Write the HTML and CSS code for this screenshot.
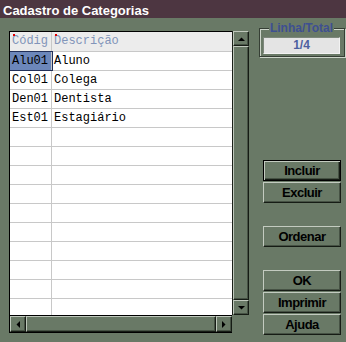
FILE: index.html
```html
<!DOCTYPE html>
<html>
<head>
<meta charset="utf-8">
<link rel="stylesheet" href="styles.css">
</head>
<body>
<div class="title">Cadastro de Categorias</div>
<div class="main">
  <div class="grid">
    <div class="table">
      <div class="row head">
        <div class="cell c1"><i class="req"></i>Códig</div>
        <div class="cell c2"><i class="req"></i>Descrição</div>
      </div>
      <div class="row"><div class="cell c1 sel">Alu01</div><div class="cell c2">Aluno</div></div>
      <div class="row"><div class="cell c1">Col01</div><div class="cell c2">Colega</div></div>
      <div class="row"><div class="cell c1">Den01</div><div class="cell c2">Dentista</div></div>
      <div class="row"><div class="cell c1">Est01</div><div class="cell c2">Estagiário</div></div>
      <div class="row"><div class="cell c1"></div><div class="cell c2"></div></div>
      <div class="row"><div class="cell c1"></div><div class="cell c2"></div></div>
      <div class="row"><div class="cell c1"></div><div class="cell c2"></div></div>
      <div class="row"><div class="cell c1"></div><div class="cell c2"></div></div>
      <div class="row"><div class="cell c1"></div><div class="cell c2"></div></div>
      <div class="row"><div class="cell c1"></div><div class="cell c2"></div></div>
      <div class="row"><div class="cell c1"></div><div class="cell c2"></div></div>
      <div class="row"><div class="cell c1"></div><div class="cell c2"></div></div>
      <div class="row"><div class="cell c1"></div><div class="cell c2"></div></div>
      <div class="row"><div class="cell c1"></div><div class="cell c2"></div></div>
    </div>
    <div class="vscroll">
      <div class="sbtn bevel"><svg width="7" height="4" viewBox="0 0 7 4"><path d="M0 4H7L3.5 0.5Z" fill="#000"/></svg></div>
      <div class="thumb bevel"></div>
      <div class="sbtn bevel"><svg width="7" height="4" viewBox="0 0 7 4"><path d="M0 0H7L3.5 3.5Z" fill="#000"/></svg></div>
    </div>
    <div class="hscroll">
      <div class="hbtn bevel"><svg width="4" height="7" viewBox="0 0 4 7"><path d="M4 0V7L0.5 3.5Z" fill="#000"/></svg></div>
      <div class="thumb bevel"></div>
      <div class="hbtn bevel"><svg width="4" height="7" viewBox="0 0 4 7"><path d="M0 0V7L3.5 3.5Z" fill="#000"/></svg></div>
    </div>
    <div class="corner"></div>
  </div>
  <div class="side">
    <div class="group">
      <div class="glabel">Linha/Total</div>
      <div class="counter">1/4</div>
    </div>
    <div class="actions">
      <div class="btngroup">
        <button class="btn default">Incluir</button>
        <button class="btn">Excluir</button>
      </div>
      <div class="btngroup">
        <button class="btn">Ordenar</button>
      </div>
      <div class="btngroup">
        <button class="btn">OK</button>
        <button class="btn">Imprimir</button>
        <button class="btn">Ajuda</button>
      </div>
    </div>
  </div>
</div>
</body>
</html>
```

FILE: styles.css
```css
* { box-sizing: border-box; }

body {
  margin: 0;
  width: 346px;
  height: 342px;
  overflow: hidden;
  background: #697966;
  font-family: "Liberation Sans", Arial, sans-serif;
}

.title {
  height: 18px;
  background: #4d3641;
  color: #fff;
  font-weight: bold;
  font-size: 13px;
  line-height: 15px;
  padding: 3px 0 0 3px;
  white-space: nowrap;
}

.main {
  display: flex;
  align-items: flex-start;
}

.grid {
  display: grid;
  grid-template-columns: 223px 17px;
  grid-template-rows: 284px 18px;
  margin: 13px 0 0 9px;
}

.table {
  background: #fff;
  border-left: 1px solid #000;
  border-top: 1px solid #000;
  overflow: hidden;
  font-family: "Liberation Mono", "Courier New", monospace;
  font-size: 12px;
  color: #000;
}

.row {
  display: flex;
  height: 19px;
  border-bottom: 1px solid #c8c8c8;
}

.row.head {
  height: 20px;
  background: #ececec;
  color: #8194b9;
}

.cell {
  position: relative;
  line-height: 18px;
  padding-left: 2px;
  white-space: nowrap;
  overflow: hidden;
}

.head .cell {
  line-height: 19px;
}

.c1 {
  width: 42px;
  flex: none;
  border-right: 1px solid #c8c8c8;
}

.c2 {
  flex: 1;
}

.sel {
  overflow: visible;
  background: #6c87ba;
  outline: 1px solid #22305a;
}

.req {
  position: absolute;
  left: 3px;
  top: 2px;
  width: 2px;
  height: 2px;
  background: #e00000;
}

.bevel {
  background: #697966;
  border: 1px solid;
  border-color: #bfc8bc #161c15 #161c15 #bfc8bc;
  box-shadow: inset -1px -1px #465244;
}

.vscroll {
  display: flex;
  flex-direction: column;
  border-left: 1px solid #1b2119;
}

.sbtn {
  height: 15px;
  flex: none;
  display: flex;
  align-items: center;
  justify-content: center;
}

.thumb {
  flex: 1;
}

.hscroll {
  display: flex;
  border-left: 1px solid #000;
  border-top: 1px solid #000;
  border-bottom: 1px solid #000;
}

.hbtn {
  width: 16px;
  flex: none;
  display: flex;
  align-items: center;
  justify-content: center;
}

.side {
  width: 86px;
  margin-left: 10px;
  padding-top: 10px;
  display: flex;
  flex-direction: column;
}

.group {
  border: 1px solid #363f35;
  box-shadow: inset 1px 1px #cdd5ca, 1px 1px #cdd5ca;
  padding: 0 4px 2px 3px;
}

.glabel {
  width: fit-content;
  margin: -8px auto 2px;
  padding: 0 1px;
  font-weight: bold;
  font-size: 12px;
  line-height: 14px;
  color: #3e4f92;
  background: #697966;
}

.counter {
  height: 17px;
  background: #e4e4e4;
  border: 1px solid;
  border-color: #7d877b #f2f2f2 #f2f2f2 #7d877b;
  text-align: center;
  font-weight: bold;
  font-size: 12px;
  line-height: 15px;
  color: #4d60a0;
}

.actions {
  margin: 103px 0 0 4px;
  width: 78px;
  display: flex;
  flex-direction: column;
  gap: 23px;
}

.btngroup {
  display: flex;
  flex-direction: column;
  gap: 1px;
}

.btn {
  display: block;
  width: 78px;
  height: 21px;
  margin: 0;
  padding: 0;
  font-family: "Liberation Sans", Arial, sans-serif;
  font-weight: bold;
  font-size: 13px;
  letter-spacing: -0.5px;
  line-height: 17px;
  color: #000;
  background: #697966;
  border: 1px solid;
  border-color: #c3cbc0 #161c15 #161c15 #c3cbc0;
  box-shadow: inset -1px -1px #465244;
}

.btn.default {
  border-color: #000;
  box-shadow: inset 1px 1px #c3cbc0, inset -1px -1px #161c15, inset -2px -2px #465244;
}
```
